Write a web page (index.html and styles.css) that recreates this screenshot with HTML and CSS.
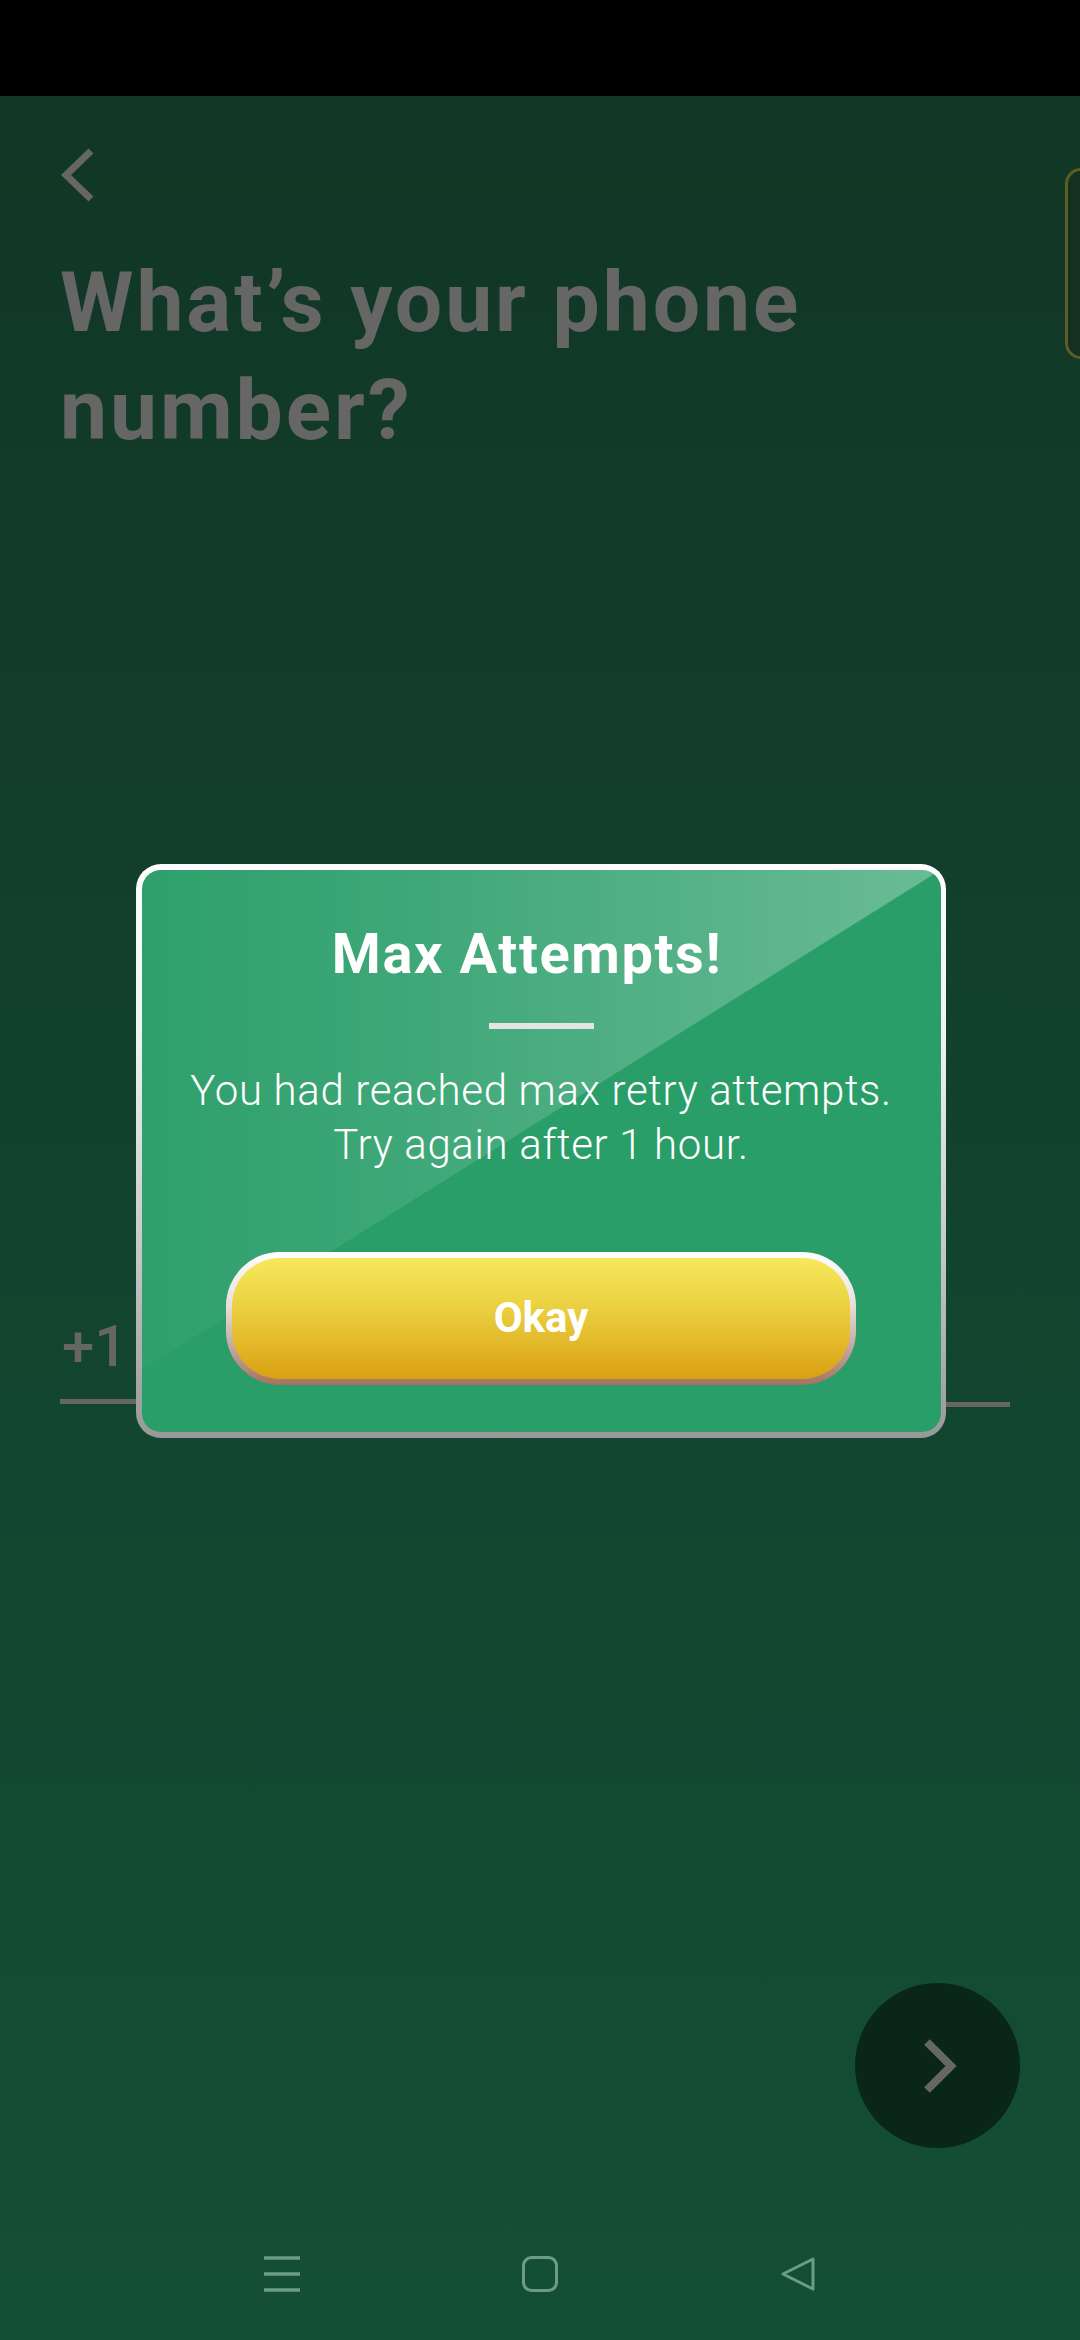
FILE: index.html
```html
<!DOCTYPE html>
<html lang="en">
<head>
<meta charset="utf-8">
<title>Phone number</title>
<link rel="stylesheet" href="styles.css">
</head>
<body>
<div class="app">
  <div class="statusbar"></div>
  <main class="screen">
    <div class="topbar">
      <button class="back" aria-label="Back">
        <svg width="34" height="54" viewBox="0 0 34 54"><polyline points="31,3 6,27 31,51" fill="none" stroke="#666" stroke-width="7"/></svg>
      </button>
      <div class="side-tab"></div>
    </div>
    <h1 class="title">What’s your phone number?</h1>
    <div class="phone-row">
      <span class="code">+1</span>
      <span class="number"></span>
    </div>
    <button class="next" aria-label="Next">
      <svg width="36" height="56" viewBox="0 0 36 56"><polyline points="5,4 29,28 5,52" fill="none" stroke="#666" stroke-width="8"/></svg>
    </button>
  </main>
  <nav class="navbar">
    <svg width="36" height="36" viewBox="0 0 36 36"><g stroke="#6d9c84" stroke-width="3.4"><line x1="0" y1="2" x2="36" y2="2"/><line x1="0" y1="18" x2="36" y2="18"/><line x1="0" y1="34" x2="36" y2="34"/></g></svg>
    <svg width="36" height="36" viewBox="0 0 36 36"><rect x="1.5" y="1.5" width="33" height="33" rx="8" fill="none" stroke="#6d9c84" stroke-width="3"/></svg>
    <svg width="36" height="36" viewBox="0 0 36 36"><path d="M33 3 L3 18 L33 33 Z" fill="none" stroke="#6d9c84" stroke-width="3" stroke-linejoin="round"/></svg>
  </nav>

  <div class="overlay">
    <div class="dialog">
      <div class="dialog-inner">
        <div class="gloss"></div>
        <h2 class="dialog-title">Max Attempts!</h2>
        <div class="divider"></div>
        <p class="dialog-text">You had reached max retry attempts.<br>Try again after 1 hour.</p>
        <div class="okay">
          <div class="okay-inner">Okay</div>
        </div>
      </div>
    </div>
  </div>
</div>
</body>
</html>
```

FILE: styles.css
```css
* { box-sizing: border-box; }
html, body { margin: 0; padding: 0; }
body {
  width: 1080px;
  height: 2340px;
  overflow: hidden;
  font-family: Roboto, "Liberation Sans", sans-serif;
  background: #000;
}
.app {
  position: relative;
  width: 1080px;
  height: 2340px;
  display: flex;
  flex-direction: column;
  background: linear-gradient(180deg, #113524 0%, #12402c 40%, #134f35 100%);
}
.statusbar {
  height: 96px;
  flex: none;
  background: #000;
}
.screen {
  flex: 1;
  display: flex;
  flex-direction: column;
  padding: 52px 0 60px 60px;
}
.topbar {
  height: 54px;
  display: flex;
  justify-content: space-between;
  align-items: flex-start;
}
.back {
  border: 0;
  background: none;
  padding: 0;
  width: 34px;
  height: 54px;
}
.back svg { display: block; }
.side-tab {
  width: 40px;
  height: 191px;
  margin-top: 20px;
  margin-right: -25px;
  border: 3px solid #5a5e22;
  border-radius: 16px;
  background: #15301f;
  flex: none;
}
.title {
  margin: 47px 0 0 0;
  font-size: 84px;
  line-height: 108px;
  font-weight: 700;
  letter-spacing: 2.9px;
  color: #666;
  width: 960px;
}
.phone-row {
  margin-top: 846px;
  display: flex;
  align-items: flex-end;
  width: 950px;
  gap: 20px;
}
.code {
  width: 130px;
  font-size: 58px;
  line-height: 70px;
  font-weight: 500;
  color: #666;
  padding: 0 0 18px 2px;
  border-bottom: 5px solid #666;
}
.number {
  flex: 1;
  height: 5px;
  background: #666;
  margin-bottom: -3px;
}
.next {
  margin-top: auto;
  align-self: flex-end;
  margin-right: 60px;
  width: 165px;
  height: 165px;
  border-radius: 50%;
  border: 0;
  background: #0a2619;
  display: flex;
  align-items: center;
  justify-content: center;
  padding: 0 0 0 4px;
}
.next svg { display: block; }
.navbar {
  height: 132px;
  flex: none;
  display: flex;
  justify-content: center;
  align-items: center;
  gap: 222px;
}
.navbar svg { display: block; }

.overlay {
  position: absolute;
  inset: 0;
  display: flex;
  justify-content: center;
  align-items: flex-start;
  padding-top: 864px;
}
.dialog {
  margin-left: 1px;
  width: 810px;
  padding: 6px 5px 6px 6px;
  border-radius: 25px;
  background: linear-gradient(180deg, #ffffff 0%, #f2f2f2 30%, #c4c4c4 70%, #989898 100%);
}
.dialog-inner {
  position: relative;
  overflow: hidden;
  border-radius: 19px;
  background: #2a9e69;
  padding: 51px 0 47px;
  display: flex;
  flex-direction: column;
  align-items: center;
}
.gloss {
  position: absolute;
  inset: 0;
  background: linear-gradient(90deg, rgba(255,255,255,0.02) 0%, rgba(255,255,255,0.1) 35%, rgba(255,255,255,0.3) 100%);
  clip-path: polygon(0 0, 100% 0, 0 500px);
}
.dialog-title {
  position: relative;
  margin: 0 28px 0 0;
  font-size: 56px;
  line-height: 66px;
  font-weight: 700;
  letter-spacing: 1.6px;
  color: #fff;
}
.divider {
  position: relative;
  margin-top: 36px;
  width: 105px;
  height: 6px;
  background: #e4e4e4;
}
.dialog-text {
  position: relative;
  margin: 35px 0 0;
  font-size: 42px;
  line-height: 54px;
  font-weight: 300;
  letter-spacing: 0.65px;
  color: #fff;
  text-align: center;
}
.okay {
  position: relative;
  margin-top: 80px;
  width: 630px;
  height: 133px;
  padding: 6px;
  border-radius: 54px;
  background: linear-gradient(180deg, #ffffff 0%, #e9dfdc 40%, #c0a197 75%, #a5725f 100%);
}
.okay-inner {
  height: 100%;
  border-radius: 48px;
  background: linear-gradient(180deg, #f6e95b 0%, #ecd444 35%, #e3b92a 70%, #d9a013 100%);
  display: flex;
  align-items: center;
  justify-content: center;
  font-size: 42px;
  font-weight: 700;
  color: #fff;
  padding-bottom: 2px;
}
```
